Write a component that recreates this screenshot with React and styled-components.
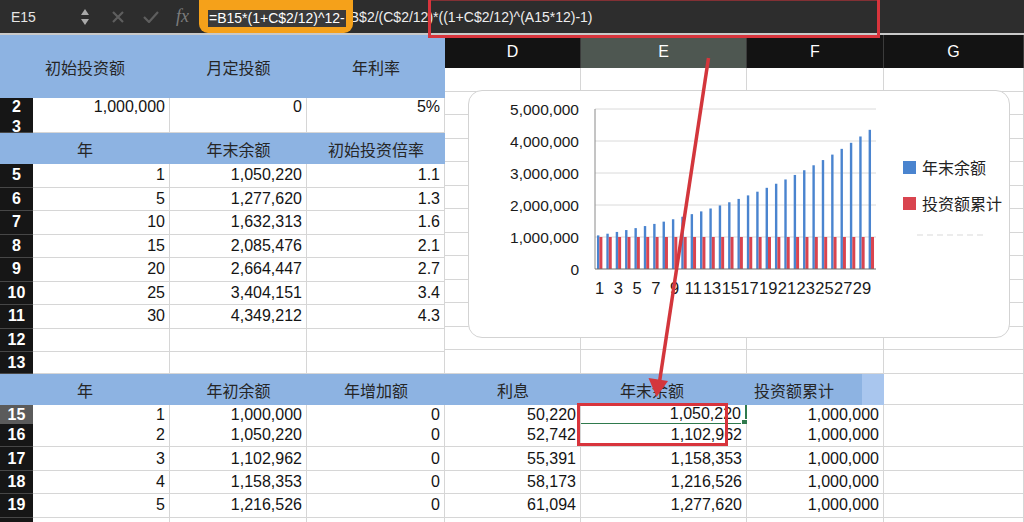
import React from 'react';
import styled, { createGlobalStyle, css } from 'styled-components';

const GlobalStyle = createGlobalStyle`
  html, body { margin: 0; padding: 0; background: #fff; }
  body { font-family: "Liberation Sans", "Noto Sans CJK SC", sans-serif; }
  * { box-sizing: border-box; }
`;

const CJK = `"Noto Sans CJK SC", "Liberation Sans", sans-serif`;

const Page = styled.div`
  position: relative;
  width: 1024px;
  height: 522px;
  overflow: hidden;
  background: #fff;
  display: flex;
  flex-direction: column;
`;

/* ---------- formula bar ---------- */
const FormulaBar = styled.div`
  height: 35px;
  flex: none;
  background: #2d2d2d;
  border-bottom: 2px solid #c9c9c9;
  display: flex;
  align-items: center;
  color: #ececec;
  font-size: 14px;
`;
const NameBox = styled.div`
  width: 80px;
  padding-left: 11px;
  color: #e6e6e6;
  font-size: 14px;
`;
const IconSlot = styled.div`
  display: flex;
  align-items: center;
  margin-left: ${p => p.$ml || 0}px;
`;
const Fx = styled.span`
  margin-left: 17px;
  font-family: "Liberation Serif", serif;
  font-style: italic;
  font-size: 18px;
  color: #7c7c7c;
  width: 14px;
`;
const Highlight = styled.div`
  align-self: stretch;
  margin-left: 9px;
  background: #f5a11a;
  border-radius: 0 0 9px 9px;
  padding: 10px 7px 0 9px;
  position: relative;
  z-index: 1;
`;
const Selected = styled.span`
  display: block;
  background: #3a3a3a;
  color: #fff;
  font-size: 14px;
  line-height: 17px;
  padding: 0 1px;
  white-space: nowrap;
`;
const FormulaRest = styled.span`
  margin-left: -3px;
  color: #ededed;
  white-space: nowrap;
`;

/* ---------- sheet ---------- */
const TopArea = styled.div`
  display: flex;
  flex: none;
  height: 339px;
`;
const Pane = styled.div`
  width: ${p => p.$w}px;
  display: flex;
  flex-direction: column;
  flex: none;
`;
const GridRow = styled.div`
  display: grid;
  grid-template-columns: ${p => p.$cols};
  height: ${p => p.$h}px;
  flex: none;
`;
const Band = styled(GridRow)`
  background: ${p => (p.$plain ? 'transparent' : '#8db3e2')};
`;
const BandLabel = styled.div`
  display: flex;
  align-items: center;
  justify-content: center;
  font-family: ${CJK};
  font-size: 16px;
  color: #262626;
  padding-right: ${p => p.$pr || 0}px;
  background: ${p => p.$bg || 'transparent'};
`;
const RowNum = styled.div`
  background: ${p => (p.$active ? '#5b5b5b' : '#161616')};
  color: #fff;
  font-weight: 700;
  font-size: 16px;
  display: flex;
  align-items: center;
  justify-content: center;
  border-bottom: 1px solid #474747;
  overflow: hidden;
  ${p => p.$clip && css`
    align-items: flex-start;
    padding-top: 3px;
    line-height: 16px;
  `}
`;
const Cell = styled.div`
  position: relative;
  background: #fff;
  border-right: 1px solid #d6d6d6;
  border-bottom: 1px solid #d6d6d6;
  display: flex;
  align-items: center;
  justify-content: flex-end;
  padding-right: 4px;
  font-size: 16px;
  color: #141414;
  white-space: nowrap;
  ${p => p.$selected && css`
    border-bottom: 2px solid #2f7a4d;
    border-right: 2px solid #2f7a4d;
    &::after {
      content: '';
      position: absolute;
      right: -4px;
      bottom: -4px;
      width: 6px;
      height: 6px;
      background: #2f7a4d;
      border: 1px solid #fff;
    }
  `}
`;
const ColHead = styled.div`
  background: ${p => (p.$active ? '#4e5751' : '#131313')};
  border-right: 1px solid #3b3b3b;
  color: #fff;
  font-size: 16px;
  display: flex;
  align-items: center;
  justify-content: center;
`;

/* ---------- chart ---------- */
const ChartBox = styled.div`
  position: absolute;
  left: 468px;
  top: 90px;
  width: 542px;
  height: 248px;
  background: #fff;
  border: 1px solid #d3d3d3;
  border-radius: 14px;
  display: flex;
  z-index: 2;
`;
const Legend = styled.div`
  display: flex;
  flex-direction: column;
  gap: 18px;
  padding-top: 67px;
`;
const LegendItem = styled.div`
  display: flex;
  align-items: center;
  gap: 6px;
  height: 18px;
  font-family: ${CJK};
  font-size: 16px;
  color: #222;
  white-space: nowrap;
`;
const Swatch = styled.span`
  width: 13px;
  height: 13px;
  background: ${p => p.$c};
`;
const FaintDash = styled.div`
  margin: 4px 0 0 14px;
  width: 66px;
  border-top: 2px dashed #ececec;
`;

const Overlay = styled.svg`
  position: absolute;
  left: 0;
  top: 0;
  pointer-events: none;
  z-index: 5;
`;

/* ---------- data ---------- */
const LEFT_COLS = '33px 137px 137px 138px';
const RIGHT_COLS = '136px 166px 137px 140px';
const FULL_COLS = '33px 137px 137px 138px 136px 166px 137px 140px';

const midRows = [
  [5, '1', '1,050,220', '1.1'],
  [6, '5', '1,277,620', '1.3'],
  [7, '10', '1,632,313', '1.6'],
  [8, '15', '2,085,476', '2.1'],
  [9, '20', '2,664,447', '2.7'],
  [10, '25', '3,404,151', '3.4'],
  [11, '30', '4,349,212', '4.3'],
  [12, '', '', ''],
];

const bottomRows = [
  [15, '1', '1,000,000', '0', '50,220', '1,050,220', '1,000,000', 19],
  [16, '2', '1,050,220', '0', '52,742', '1,102,962', '1,000,000', 23.4],
  [17, '3', '1,102,962', '0', '55,391', '1,158,353', '1,000,000', 23.4],
  [18, '4', '1,158,353', '0', '58,173', '1,216,526', '1,000,000', 23.4],
  [19, '5', '1,216,526', '0', '61,094', '1,277,620', '1,000,000', 23.4],
  [20, '', '', '', '', '', '', 10],
];

function Chart() {
  const X0 = 126, X1 = 407, Y0 = 178, per = 32 / 1e6;
  const n = 30;
  const w = (X1 - X0) / n;
  const grid = [0, 1, 2, 3, 4, 5];
  const labels = ['0', '1,000,000', '2,000,000', '3,000,000', '4,000,000', '5,000,000'];
  return (
    <ChartBox>
      <svg width="434" height="246" viewBox="0 0 434 246">
        {grid.map(g => (
          g > 0 && <line key={'g' + g} x1={X0} x2={X1} y1={Y0 - g * 1e6 * per} y2={Y0 - g * 1e6 * per} stroke="#dadada" strokeWidth="1" />
        ))}
        {grid.map(g => (
          <text key={'t' + g} x="110" y={Y0 - g * 1e6 * per + 5.5} textAnchor="end" fontSize="15.5" fontFamily="Liberation Sans, sans-serif" fill="#1a1a1a">{labels[g]}</text>
        ))}
        {Array.from({ length: n }, (_, i) => {
          const c = X0 + (i + 0.5) * w;
          const v = 1e6 * Math.pow(1.05022, i + 1);
          return (
            <g key={i}>
              <rect x={c - 2.7} y={Y0 - v * per} width="2.4" height={v * per} fill="#4a84cf" />
              <rect x={c - 0.3} y={Y0 - 1e6 * per} width="3" height={1e6 * per} fill="#d9444f" />
            </g>
          );
        })}
        <line x1={X0} x2={X0} y1={Y0 - 160} y2={Y0} stroke="#8a8a8a" strokeWidth="1" />
        <line x1={X0} x2={X1} y1={Y0} y2={Y0} stroke="#6e6e6e" strokeWidth="1.2" />
        {Array.from({ length: 15 }, (_, k) => {
          const i = k * 2;
          const c = X0 + (i + 0.5) * w;
          return (
            <text key={'x' + k} x={c} y="203" textAnchor="middle" fontSize="16.5" fontFamily="Liberation Sans, sans-serif" fill="#1a1a1a">{i + 1}</text>
          );
        })}
      </svg>
      <Legend>
        <LegendItem><Swatch $c="#4a84cf" />年末余额</LegendItem>
        <LegendItem><Swatch $c="#d9444f" />投资额累计</LegendItem>
        <FaintDash />
      </Legend>
    </ChartBox>
  );
}

export default function App() {
  return (
    <>
      <GlobalStyle />
      <Page>
        <FormulaBar>
          <NameBox>E15</NameBox>
          <IconSlot>
            <svg width="10" height="20" viewBox="0 0 10 20">
              <polygon points="5,2 9,8 1,8" fill="#a9a9a9" />
              <polygon points="1,12 9,12 5,18" fill="#a9a9a9" />
            </svg>
          </IconSlot>
          <IconSlot $ml={22}>
            <svg width="12" height="12" viewBox="0 0 12 12">
              <path d="M1 1 L11 11 M11 1 L1 11" stroke="#5e5e5e" strokeWidth="2.2" />
            </svg>
          </IconSlot>
          <IconSlot $ml={19}>
            <svg width="16" height="12" viewBox="0 0 16 12">
              <path d="M1 6 L6 11 L15 1" stroke="#5e5e5e" strokeWidth="2.2" fill="none" />
            </svg>
          </IconSlot>
          <Fx>fx</Fx>
          <Highlight>
            <Selected>=B15*(1+C$2/12)^12-</Selected>
          </Highlight>
          <FormulaRest>B$2/(C$2/12)*((1+C$2/12)^(A15*12)-1)</FormulaRest>
        </FormulaBar>

        <TopArea>
          <Pane $w={445}>
            <Band $cols="170px 137px 138px" $h={63}>
              <BandLabel>初始投资额</BandLabel>
              <BandLabel>月定投额</BandLabel>
              <BandLabel>年利率</BandLabel>
            </Band>
            <GridRow $cols={LEFT_COLS} $h={18}>
              <RowNum>2</RowNum>
              <Cell>1,000,000</Cell>
              <Cell>0</Cell>
              <Cell>5%</Cell>
            </GridRow>
            <GridRow $cols={LEFT_COLS} $h={17}>
              <RowNum $clip>3</RowNum>
              <Cell />
              <Cell />
              <Cell />
            </GridRow>
            <Band $cols="170px 137px 138px" $h={31}>
              <BandLabel>年</BandLabel>
              <BandLabel>年末余额</BandLabel>
              <BandLabel>初始投资倍率</BandLabel>
            </Band>
            {midRows.map(r => (
              <GridRow key={r[0]} $cols={LEFT_COLS} $h={23.5}>
                <RowNum>{r[0]}</RowNum>
                <Cell>{r[1]}</Cell>
                <Cell>{r[2]}</Cell>
                <Cell>{r[3]}</Cell>
              </GridRow>
            ))}
            <GridRow $cols={LEFT_COLS} $h={22}>
              <RowNum>13</RowNum>
              <Cell />
              <Cell />
              <Cell />
            </GridRow>
          </Pane>

          <Pane $w={579}>
            <GridRow $cols={RIGHT_COLS} $h={33}>
              <ColHead>D</ColHead>
              <ColHead $active>E</ColHead>
              <ColHead>F</ColHead>
              <ColHead>G</ColHead>
            </GridRow>
            {Array.from({ length: 13 }, (_, i) => (
              <GridRow key={i} $cols={RIGHT_COLS} $h={306 / 13}>
                <Cell />
                <Cell />
                <Cell />
                <Cell />
              </GridRow>
            ))}
          </Pane>
        </TopArea>

        <Band $plain $cols="170px 137px 138px 136px 166px 137px 140px" $h={31}>
          <BandLabel $bg="#8db3e2">年</BandLabel>
          <BandLabel $bg="#8db3e2">年初余额</BandLabel>
          <BandLabel $bg="#8db3e2">年增加额</BandLabel>
          <BandLabel $bg="#8db3e2">利息</BandLabel>
          <BandLabel $bg="#8db3e2" $pr={24}>年末余额</BandLabel>
          <BandLabel $bg="linear-gradient(to right, #8db3e2 115px, #a9c6ee 115px)" $pr={43}>投资额累计</BandLabel>
          <Cell />
        </Band>
        {bottomRows.map(r => (
          <GridRow key={r[0]} $cols={FULL_COLS} $h={r[7]}>
            <RowNum $active={r[0] === 15}>{r[0] === 20 ? '' : r[0]}</RowNum>
            <Cell>{r[1]}</Cell>
            <Cell>{r[2]}</Cell>
            <Cell>{r[3]}</Cell>
            <Cell>{r[4]}</Cell>
            <Cell $selected={r[0] === 15}>{r[5]}</Cell>
            <Cell>{r[6]}</Cell>
            <Cell />
          </GridRow>
        ))}

        <Chart />

        <Overlay width="1024" height="522" viewBox="0 0 1024 522">
          <rect x="429.5" y="-1" width="449" height="37.5" fill="none" stroke="#d8343c" strokeWidth="3" />
          <rect x="578.5" y="404.5" width="148" height="40" fill="none" stroke="#d8343c" strokeWidth="3" />
          <line x1="708.5" y1="58" x2="659.5" y2="382" stroke="#d3363c" strokeWidth="3.5" />
          <polygon points="656.5,397 648.5,378 668,381" fill="#d3363c" />
        </Overlay>
      </Page>
    </>
  );
}
